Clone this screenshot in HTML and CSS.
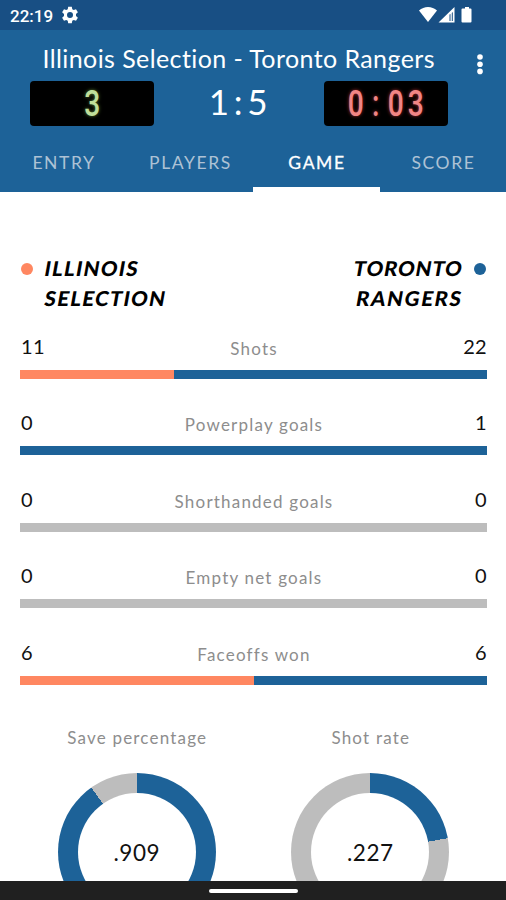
FILE: index.html
```html
<!DOCTYPE html>
<html lang="en">
<head>
<meta charset="utf-8">
<title>Game statistics</title>
<link rel="stylesheet" href="styles.css">
</head>
<body>
<div class="phone">
  <div class="status">
    <span class="time">22:19</span>
    <svg class="gear" width="18" height="18" viewBox="0 0 24 24"><path fill="#fff" fill-rule="evenodd" d="M9.6 1h4.8l.6 3.200 2 1.100 3-1.100 2.500 4.200-2.500 2.100v2.900l2.500 2.100-2.500 4.200-3-1.100-2 1.200-.6 3.200H9.600L9 19.800l-2-1.200-3 1.100-2.500-4.200L4 13.400v-2.900L1.500 8.400 4 4.200l3 1.100 2-1.100zM12 8a4 4 0 1 0 0 8 4 4 0 0 0 0-8z"/></svg>
    <svg class="signals" width="56" height="18" viewBox="0 0 56 18"><path fill="#fff" d="M0 4.500C5-.3 13-.3 18 4.500L9 16z"/><path fill="#fff" fill-rule="evenodd" d="M19.500 16.500 35.500 1v15.500zM30.500 8.500v6.500h1V8zM32.800 7v8h1V6z"/><path fill="#fff" d="M46 1h4v1.500h1.500a1 1 0 0 1 1 1v12a1 1 0 0 1-1 1h-8a1 1 0 0 1-1-1v-12a1 1 0 0 1 1-1H46z"/></svg>
  </div>
  <header class="header">
    <div class="board">
      <h1 class="title">Illinois Selection - Toronto Rangers</h1>
      <div class="scores">
        <div class="led green"><span class="digits">3</span></div>
        <div class="score">1:5</div>
        <div class="led red"><span class="digits">0<span class="colon">:</span>03</span></div>
      </div>
    </div>
    <svg class="more" width="8" height="22" viewBox="0 0 8 22"><g fill="#fff"><circle cx="4" cy="4" r="2.800"/><circle cx="4" cy="11.200" r="2.800"/><circle cx="4" cy="18.400" r="2.800"/></g></svg>
  </header>
  <nav class="tabs">
    <span class="tab">ENTRY</span><span class="tab">PLAYERS</span><span class="tab active">GAME</span><span class="tab">SCORE</span>
  </nav>
  <main class="content">
    <div class="teams">
      <div class="team"><i class="dot home"></i><div><div class="name">ILLINOIS</div><div class="name">SELECTION</div></div></div>
      <div class="team away-team"><div><div class="name">TORONTO</div><div class="name">RANGERS</div></div><i class="dot away"></i></div>
    </div>
    <section class="stat"><div class="row"><b>11</b><span>Shots</span><b>22</b></div><div class="bar away"><div class="home" style="width:33%"></div></div></section>
    <section class="stat"><div class="row"><b>0</b><span>Powerplay goals</span><b>1</b></div><div class="bar away"></div></section>
    <section class="stat"><div class="row"><b>0</b><span>Shorthanded goals</span><b>0</b></div><div class="bar"></div></section>
    <section class="stat"><div class="row"><b>0</b><span>Empty net goals</span><b>0</b></div><div class="bar"></div></section>
    <section class="stat"><div class="row"><b>6</b><span>Faceoffs won</span><b>6</b></div><div class="bar away"><div class="home" style="width:50%"></div></div></section>
    <div class="charts">
      <div class="chart"><div class="label">Save percentage</div><div class="ring" style="--p:90.2%"><div class="hole">.909</div></div></div>
      <div class="chart"><div class="label">Shot rate</div><div class="ring" style="--p:22.2%"><div class="hole">.227</div></div></div>
    </div>
  </main>
  <div class="navbar"><div class="handle"></div></div>
</div>
</body>
</html>
```
FILE: styles.css
```css
* { box-sizing: border-box; }
body { margin: 0; background: #fff; font-family: Lato, sans-serif; color: #111; }
.phone { width: 506px; height: 900px; display: flex; flex-direction: column; overflow: hidden; }
.status { height: 30px; flex: none; background: #184f84; color: #fff; display: flex; align-items: center; padding: 0 31px 0 10px; }
.time { font: 500 17px/30px Roboto, sans-serif; width: 51px; padding-top: 1px; }
.signals { margin-left: auto; }
.header { height: 104px; flex: none; background: #1d6298; color: #fff; display: flex; padding-left: 30px; }
.board { width: 418px; }
.title { margin: 0; height: 51px; padding-left: 12.5px; font-size: 25px; line-height: 57px; font-weight: 400; white-space: nowrap; letter-spacing: .41px; }
.scores { display: flex; justify-content: space-between; }
.led { width: 124px; height: 45px; border-radius: 4px; background: #000; text-align: center; font: 500 36px/46px Roboto, sans-serif; }
.digits { display: inline-block; transform: scaleX(.78); letter-spacing: 5px; padding-left: 5px; }
.green { color: #c0df9b; text-shadow: 0 0 4px #5c8032; }
.red { color: #f08585; text-shadow: 0 0 4px #a52d2d; }
.colon { display: inline-block; width: 26px; }
.score { font-size: 35px; line-height: 41px; letter-spacing: 4.8px; padding-left: 3px; }
.more { margin: 23px 0 0 28px; }
.tabs { height: 58px; flex: none; background: #1d6298; display: grid; grid-template-columns: repeat(4, 126.500px); }
.tab { height: 58px; padding-left: 1.500px; text-align: center; font-size: 17.5px; line-height: 58px; letter-spacing: 1.6px; color: #aec2d5; }
.active { color: #fff; border-bottom: 5px solid #fff; -webkit-text-stroke: .3px #fff; }
.content { height: 689px; flex: none; padding: 61px 19px 0 20px; overflow: hidden; }
.teams { height: 78px; display: flex; justify-content: space-between; padding: 0 1px; }
.team { display: flex; gap: 12px; font-size: 20.5px; line-height: 30px; font-weight: 900; letter-spacing: 1.3px; color: #000; }
.name { transform: skewX(-10deg); }
.away-team { text-align: right; gap: 11px; }
.away-team .name:first-child { letter-spacing: .9px; }
.away-team .name { letter-spacing: 1.7px; }
.dot { width: 12px; height: 12px; border-radius: 50%; margin-top: 10px; }
.home { background: #ff8761; }
.away { background: #1d6298; }
.stat { height: 76.400px; }
.row { height: 39px; display: grid; grid-template-columns: 60px 1fr 60px; line-height: 31px; }
.row b { font-size: 20px; font-weight: 400; letter-spacing: .3px; padding-left: 1px; }
.row b:last-child { text-align: right; }
.row span { text-align: center; padding-left: 1px; }
.row span, .label { color: #8d8d8d; font-size: 17px; letter-spacing: 1.200px; }
.row span { line-height: 35px; }
.bar { height: 9px; background: #bdbdbd; }
.bar.away { background: #1d6298; }
.bar div { height: 9px; }
.charts { display: grid; grid-template-columns: 1fr 1fr; padding-top: 12px; }
.chart { display: flex; flex-direction: column; align-items: center; }
.label { height: 48px; line-height: 25px; padding-left: 1px; }
.ring { width: 158px; height: 158px; border-radius: 50%; background: conic-gradient(#1d6298 var(--p), #bdbdbd 0); padding: 20px; }
.hole { width: 118px; height: 118px; border-radius: 50%; background: #fff; text-align: center; font-size: 22.5px; line-height: 119px; letter-spacing: .5px; }
.navbar { height: 19px; flex: none; background: #202020; display: flex; justify-content: center; align-items: center; }
.handle { width: 89px; height: 4px; border-radius: 2px; background: #fff; }
```
